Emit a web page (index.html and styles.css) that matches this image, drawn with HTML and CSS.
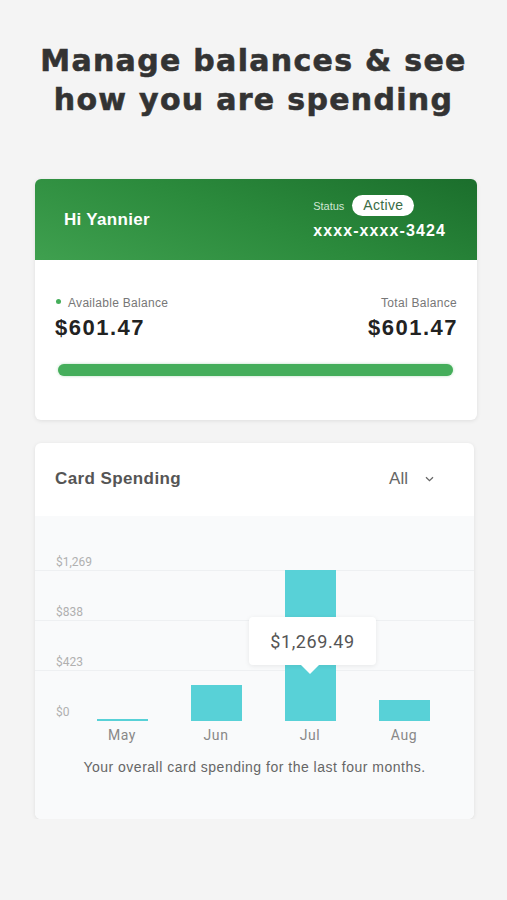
FILE: index.html
```html
<!DOCTYPE html>
<html>
<head>
<title>Manage balances</title>
<meta charset="utf-8">
<link rel="stylesheet" href="styles.css">
</head>
<body>
  <h1 class="headline">Manage balances &amp; see<br>how you are spending</h1>

  <div class="card balanceCard">
    <div class="cardTop">
      <div class="greeting">Hi Yannier</div>
      <div class="cardInfo">
        <div class="statusRow">
          <span class="statusLabel">Status</span>
          <span class="pill">Active</span>
        </div>
        <div class="cardNum">xxxx-xxxx-3424</div>
      </div>
    </div>
    <div class="cardBody">
      <div class="balances">
        <div class="balCol">
          <div class="balLabel"><span class="dot"></span>Available Balance</div>
          <div class="balAmt">$601.47</div>
        </div>
        <div class="balCol right">
          <div class="balLabel">Total Balance</div>
          <div class="balAmt">$601.47</div>
        </div>
      </div>
      <div class="progress"><div class="progressFill"></div></div>
    </div>
  </div>

  <div class="card spendCard">
    <div class="spendHead">
      <span class="spendTitle">Card Spending</span>
      <span class="filter">All
        <svg width="9" height="6" viewBox="0 0 9 6"><path d="M1 1.2 L4.5 4.6 L8 1.2" fill="none" stroke="#666" stroke-width="1.3"/></svg>
      </span>
    </div>
    <div class="spendBody">
      <div class="chart">
        <div class="gridRow"><span>$1,269</span></div>
        <div class="gridRow"><span>$838</span></div>
        <div class="gridRow"><span>$423</span></div>
        <div class="gridRow last"><span>$0</span></div>

        <div class="bars">
          <div class="barCol"><div class="bar" style="height:2px"></div></div>
          <div class="barCol"><div class="bar" style="height:36px"></div></div>
          <div class="barCol"><div class="bar" style="height:151px"></div></div>
          <div class="barCol"><div class="bar" style="height:21px"></div></div>
        </div>

        <div class="tooltip">$1,269.49</div>
      </div>
      <div class="months">
        <span>May</span><span>Jun</span><span>Jul</span><span>Aug</span>
      </div>
      <p class="note">Your overall card spending for the last four months.</p>
    </div>
  </div>
</body>
</html>
```
FILE: styles.css
```css
body {margin: 0; background-color: #f4f4f4;
      font-family: "Liberation Sans", Arial, sans-serif;
}
.headline {margin: 0; padding-top: 41px;
           font-family: "DejaVu Sans", sans-serif; font-weight: bold;
           font-size: 30px; line-height: 39px; text-align: center;
           letter-spacing: 1.3px; color: #333;
           -webkit-text-stroke: 0.6px #333;
}

.card {margin-left: 35px; background-color: #fff; border-radius: 6px;
       box-shadow: 0 1px 4px rgba(0,0,0,0.09); overflow: hidden;
}
.balanceCard {width: 442px; margin-top: 60px;}
.spendCard {width: 439px; margin-top: 23px;}

/* green header */
.cardTop {height: 81px; padding: 0 31px 0 29px;
          display: flex; align-items: center; justify-content: space-between;
          background: linear-gradient(200deg, #1b6e2c 0%, #2b8a3c 50%, #3fa04f 100%);
          color: #fff;
}
.greeting {font-size: 17px; font-weight: bold; padding-top: 1px; letter-spacing: 0.3px;}
.cardInfo {display: flex; flex-direction: column; align-items: flex-start; padding-bottom: 4px;}
.statusRow {display: flex; align-items: center; gap: 8px;}
.statusLabel {font-size: 11px; color: #cfe6d3;}
.pill {background-color: #fff; color: #3a6c45; font-size: 14px;
       padding: 2px 11px; border-radius: 11px; line-height: 17px; letter-spacing: 0.3px;
}
.cardNum {font-size: 16px; line-height: 18px; font-weight: bold; margin-top: 6px; letter-spacing: 1.1px;}

.cardBody {padding: 36px 20px 44px 20px;}
.balances {display: flex; justify-content: space-between;}
.balCol {display: flex; flex-direction: column; gap: 5px;}
.balCol.right {align-items: flex-end;}
.balLabel {font-size: 12px; line-height: 14px; color: #777; letter-spacing: 0.3px;
           display: flex; align-items: center;
}
.dot {width: 5px; height: 5px; border-radius: 50%; background-color: #45ae5b;
      margin: 0 7px 3px 1px;
}
.balAmt {font-size: 22px; line-height: 26px; font-weight: bold; color: #222; letter-spacing: 1.5px;}
.balCol.right .balAmt {margin-right: -1px;}
.progress {margin: 23px 4px 0 3px; height: 12px; border-radius: 6px;
           background-color: #e3f2e6;
}
.progressFill {width: 100%; height: 100%; border-radius: 6px; background-color: #45ae5b;
               box-shadow: 0 0 3px rgba(69,174,91,0.4);
}

/* spending */
.spendHead {height: 73px; padding: 0 40px 0 20px; box-sizing: border-box;
            display: flex; align-items: center; justify-content: space-between;
            color: #555; font-size: 17px;
}
.spendTitle {font-weight: bold; color: #555; padding-bottom: 2px; letter-spacing: 0.4px;}
.filter {display: flex; align-items: center; gap: 17px; color: #666; padding-bottom: 2px;}
.filter svg {margin-top: 1px;}

.spendBody {background-color: #f9fafb; padding: 5px 0 44px 0;
            font-family: Roboto, "Liberation Sans", sans-serif;
}
.chart {position: relative;}
.gridRow {height: 50px; border-bottom: 1px solid #eef0f2; box-sizing: border-box;
          display: flex; align-items: flex-end; padding: 0 0 1px 21px;
}
.gridRow span {font-size: 12px; line-height: 14px; color: #b0b0b0;}
.gridRow.last {border-bottom-color: transparent;}

.bars {position: absolute; left: 40px; top: 0; width: 376px; height: 200px;
       display: grid; grid-template-columns: repeat(4, 1fr);
}
.barCol {display: flex; align-items: flex-end; justify-content: center;}
.bar {width: 51px; background-color: #58d1d7;}

.tooltip {position: absolute; left: 214px; top: 96px; width: 127px; height: 48px;
          background-color: #fff; border-radius: 4px;
          box-shadow: 0 1px 5px rgba(0,0,0,0.08);
          display: flex; align-items: center; justify-content: center;
          font-size: 18px; color: #555; letter-spacing: 0.6px;
}
.tooltip::after {content: ""; position: absolute; left: 52px; bottom: -9px;
                 border-left: 9px solid transparent; border-right: 9px solid transparent;
                 border-top: 9px solid #fff;
}

.months {margin: 6px 0 0 40px; width: 376px;
         display: grid; grid-template-columns: repeat(4, 1fr);
}
.months span {text-align: center; font-size: 14px; line-height: 16px; color: #888; letter-spacing: 0.6px;}
.note {margin: 16px 0 0 0; text-align: center; font-size: 14px; line-height: 16px;
       color: #666; letter-spacing: 0.5px;
       font-family: "Liberation Sans", Arial, sans-serif;
}
```
